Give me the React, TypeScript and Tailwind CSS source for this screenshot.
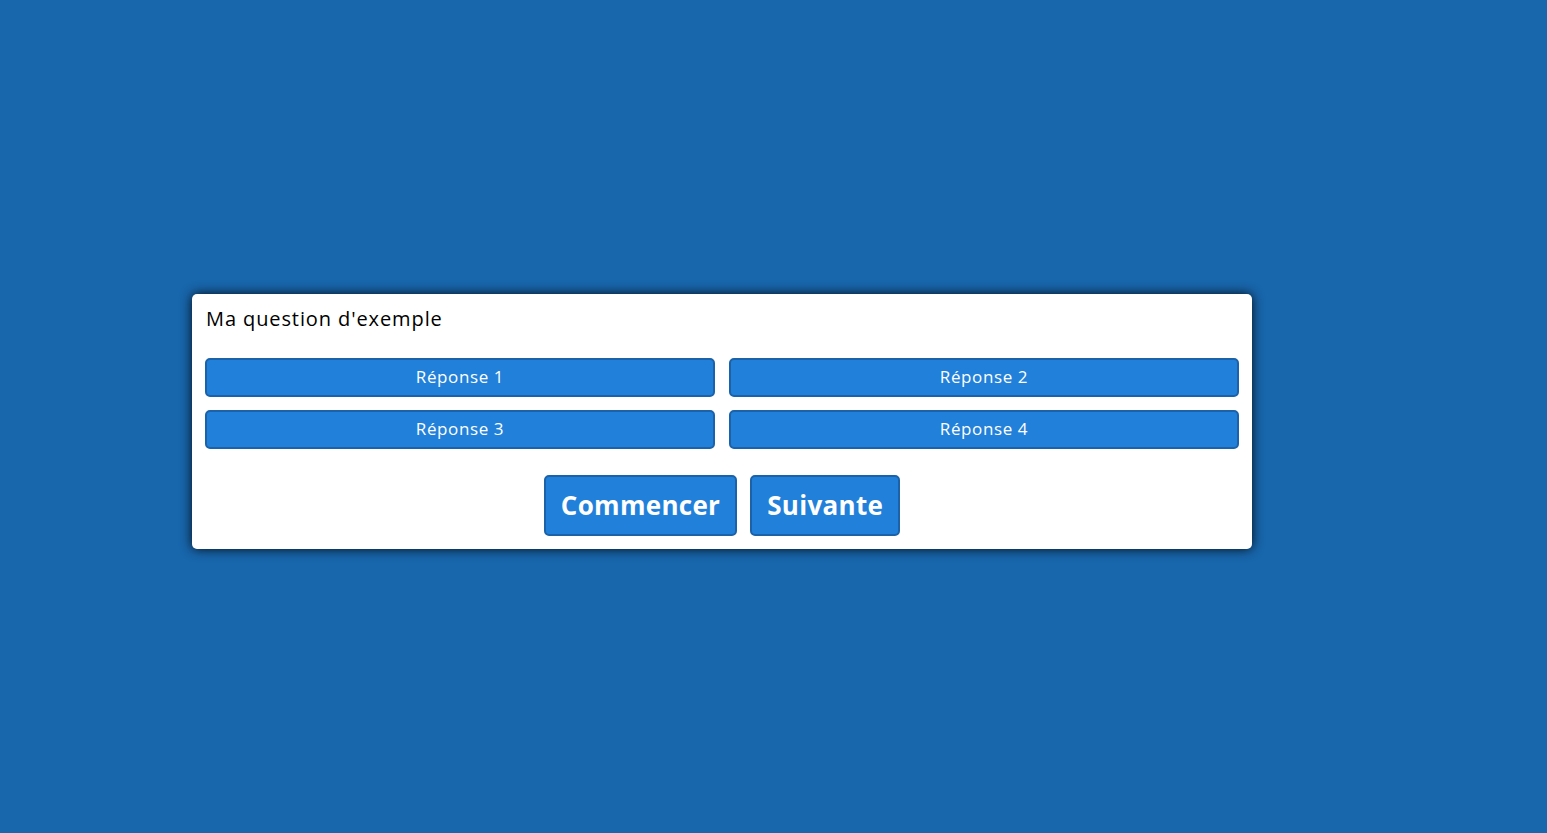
const answers = ['Réponse 1', 'Réponse 2', 'Réponse 3', 'Réponse 4'];

export default function App() {
  return (
    <div className="min-h-screen w-full bg-[#1866ac] pt-[294px] font-['Open_Sans',sans-serif]">
      <div className="ml-[192px] w-[1060px] rounded-[5px] bg-white px-[13px] pt-[10px] pb-[13px] shadow-[0_0_12px_rgba(0,0,0,0.9)]">
        <h2 className="ml-px text-[20px] leading-[30px] tracking-[0.9px] text-black">Ma question d'exemple</h2>

        <div className="mt-[24px] grid grid-cols-2 gap-x-[14px] gap-y-[13px]">
          {answers.map((a) => (
            <button
              key={a}
              className="h-[39px] rounded-[5px] border-2 border-[#1b62a8] bg-[#2180da] pb-px text-[17px] tracking-[0.6px] text-white"
            >
              {a}
            </button>
          ))}
        </div>

        <div className="mt-[26px] flex justify-center gap-[13px]">
          <button className="h-[61px] rounded-[5px] border-2 border-[#1b62a8] bg-[#2180da] px-[15px] text-[26px] font-bold tracking-[0.3px] text-white">
            Commencer
          </button>
          <button className="h-[61px] rounded-[5px] border-2 border-[#1b62a8] bg-[#2180da] px-[15px] text-[26px] font-bold tracking-[0.3px] text-white">
            Suivante
          </button>
        </div>
      </div>
    </div>
  );
}
